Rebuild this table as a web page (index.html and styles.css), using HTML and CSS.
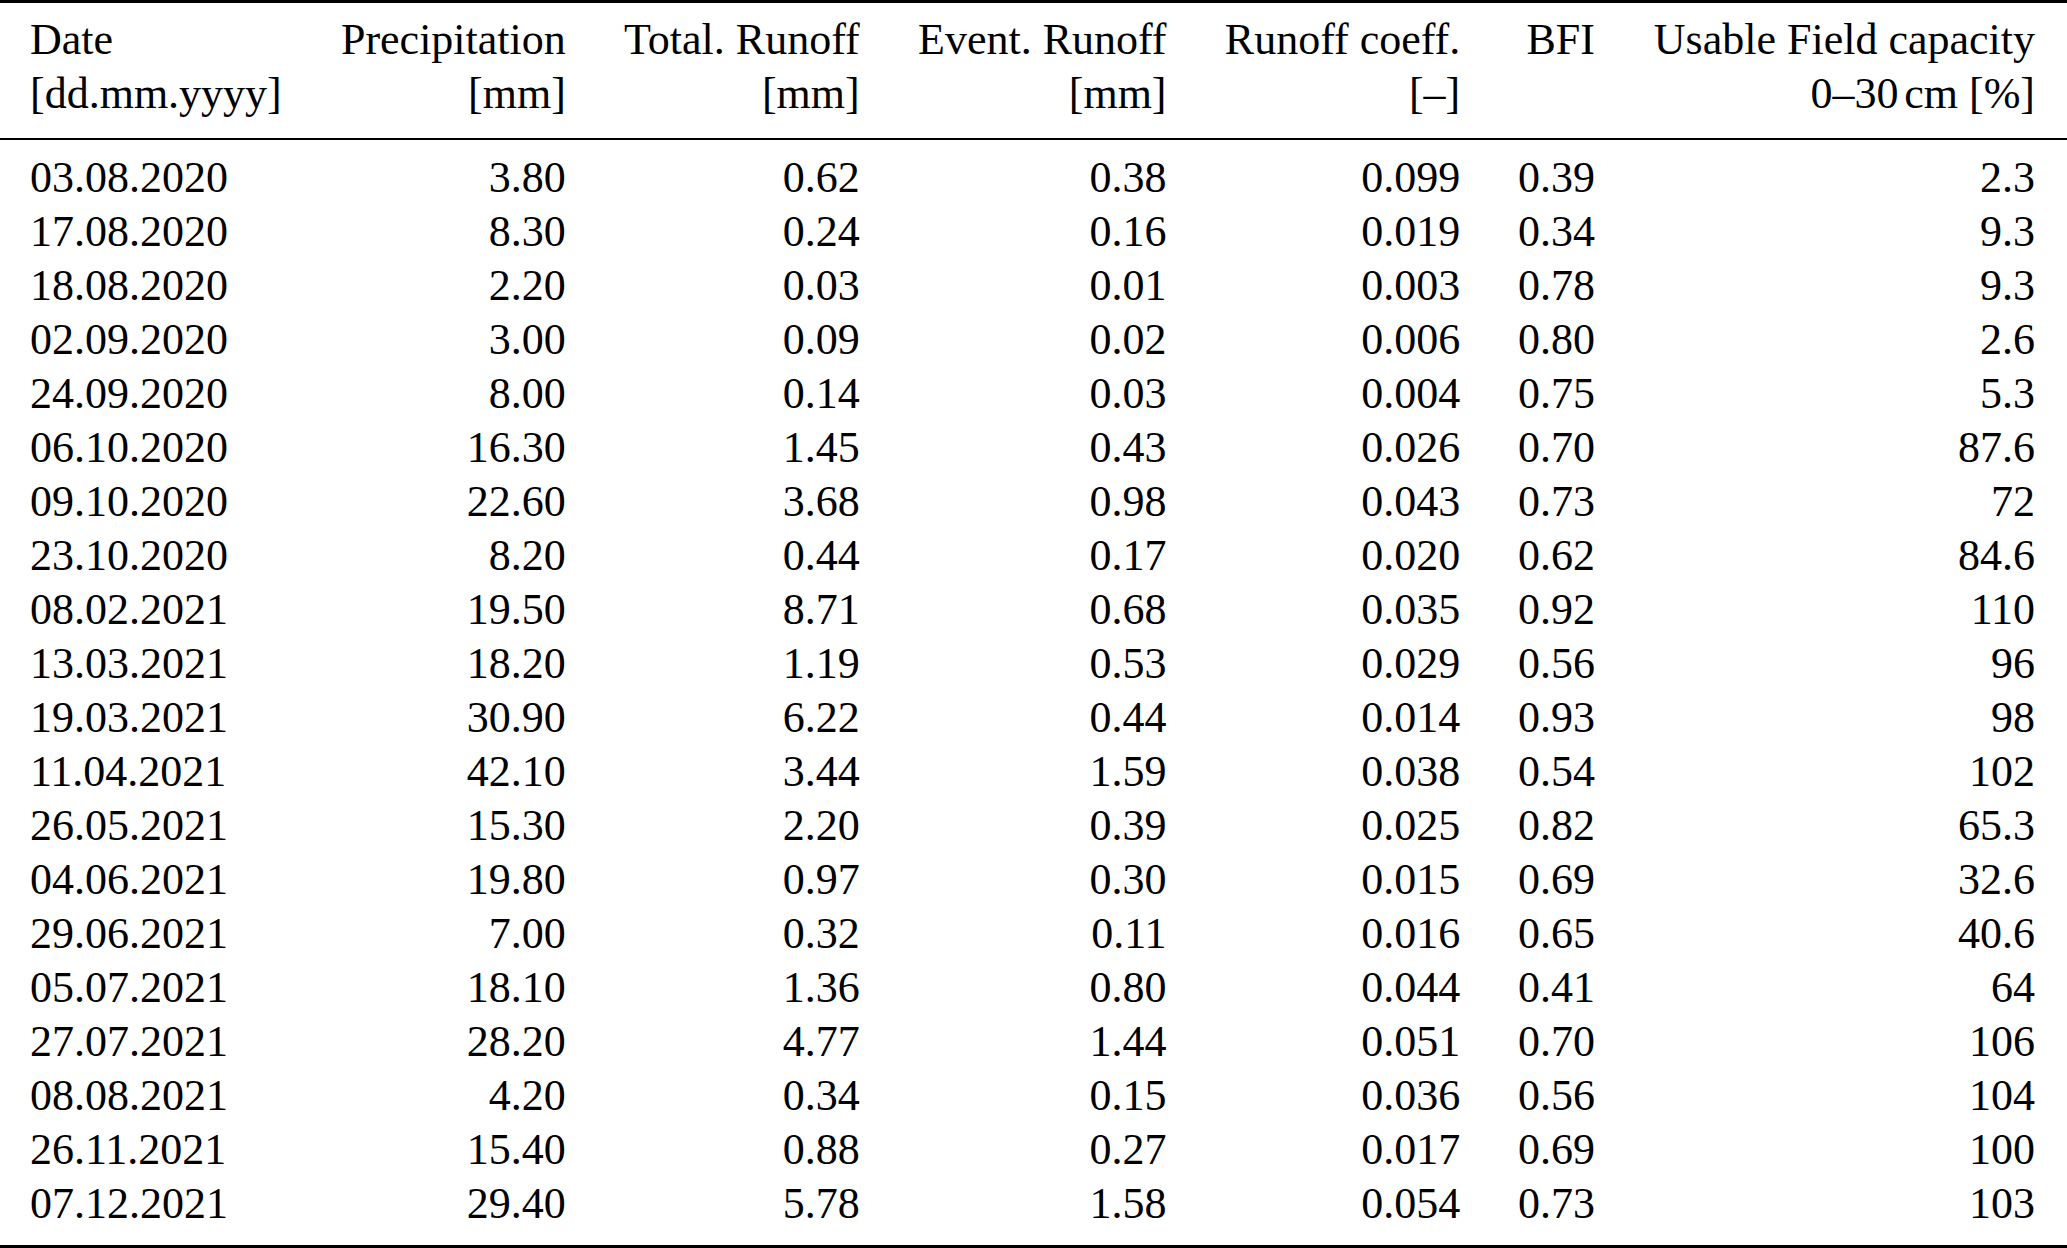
FILE: index.html
```html
<!DOCTYPE html>
<html lang="en">
<head>
<meta charset="utf-8">
<title>Runoff events</title>
<link rel="stylesheet" href="styles.css">
</head>
<body>
<table class="events">
  <thead>
    <tr>
      <th class="left">Date<br>[dd.mm.yyyy]</th>
      <th>Precipitation<br>[mm]</th>
      <th>Total. Runoff<br>[mm]</th>
      <th>Event. Runoff<br>[mm]</th>
      <th>Runoff coeff.<br>[–]</th>
      <th>BFI</th>
      <th>Usable Field capacity<br>0–30<span class="thin">&#8201;</span>cm [%]</th>
    </tr>
  </thead>
  <tbody>
    <tr><td class="left">03.08.2020</td><td>3.80</td><td>0.62</td><td>0.38</td><td>0.099</td><td>0.39</td><td>2.3</td></tr>
    <tr><td class="left">17.08.2020</td><td>8.30</td><td>0.24</td><td>0.16</td><td>0.019</td><td>0.34</td><td>9.3</td></tr>
    <tr><td class="left">18.08.2020</td><td>2.20</td><td>0.03</td><td>0.01</td><td>0.003</td><td>0.78</td><td>9.3</td></tr>
    <tr><td class="left">02.09.2020</td><td>3.00</td><td>0.09</td><td>0.02</td><td>0.006</td><td>0.80</td><td>2.6</td></tr>
    <tr><td class="left">24.09.2020</td><td>8.00</td><td>0.14</td><td>0.03</td><td>0.004</td><td>0.75</td><td>5.3</td></tr>
    <tr><td class="left">06.10.2020</td><td>16.30</td><td>1.45</td><td>0.43</td><td>0.026</td><td>0.70</td><td>87.6</td></tr>
    <tr><td class="left">09.10.2020</td><td>22.60</td><td>3.68</td><td>0.98</td><td>0.043</td><td>0.73</td><td>72</td></tr>
    <tr><td class="left">23.10.2020</td><td>8.20</td><td>0.44</td><td>0.17</td><td>0.020</td><td>0.62</td><td>84.6</td></tr>
    <tr><td class="left">08.02.2021</td><td>19.50</td><td>8.71</td><td>0.68</td><td>0.035</td><td>0.92</td><td>110</td></tr>
    <tr><td class="left">13.03.2021</td><td>18.20</td><td>1.19</td><td>0.53</td><td>0.029</td><td>0.56</td><td>96</td></tr>
    <tr><td class="left">19.03.2021</td><td>30.90</td><td>6.22</td><td>0.44</td><td>0.014</td><td>0.93</td><td>98</td></tr>
    <tr><td class="left">11.04.2021</td><td>42.10</td><td>3.44</td><td>1.59</td><td>0.038</td><td>0.54</td><td>102</td></tr>
    <tr><td class="left">26.05.2021</td><td>15.30</td><td>2.20</td><td>0.39</td><td>0.025</td><td>0.82</td><td>65.3</td></tr>
    <tr><td class="left">04.06.2021</td><td>19.80</td><td>0.97</td><td>0.30</td><td>0.015</td><td>0.69</td><td>32.6</td></tr>
    <tr><td class="left">29.06.2021</td><td>7.00</td><td>0.32</td><td>0.11</td><td>0.016</td><td>0.65</td><td>40.6</td></tr>
    <tr><td class="left">05.07.2021</td><td>18.10</td><td>1.36</td><td>0.80</td><td>0.044</td><td>0.41</td><td>64</td></tr>
    <tr><td class="left">27.07.2021</td><td>28.20</td><td>4.77</td><td>1.44</td><td>0.051</td><td>0.70</td><td>106</td></tr>
    <tr><td class="left">08.08.2021</td><td>4.20</td><td>0.34</td><td>0.15</td><td>0.036</td><td>0.56</td><td>104</td></tr>
    <tr><td class="left">26.11.2021</td><td>15.40</td><td>0.88</td><td>0.27</td><td>0.017</td><td>0.69</td><td>100</td></tr>
    <tr><td class="left">07.12.2021</td><td>29.40</td><td>5.78</td><td>1.58</td><td>0.054</td><td>0.73</td><td>103</td></tr>
  </tbody>
</table>
</body>
</html>
```

FILE: styles.css
```css
html, body {
  margin: 0;
  padding: 0;
  background: #ffffff;
}

body {
  width: 2067px;
  height: 1248px;
  overflow: hidden;
  color: #000000;
  font-family: "Liberation Serif", "Times New Roman", serif;
  font-size: 44px;
  line-height: 54px;
}

.events {
  width: 2067px;
  border-collapse: separate;
  border-spacing: 0;
}

.events th,
.events td {
  padding: 0 28.7px;
  text-align: right;
  white-space: nowrap;
  vertical-align: top;
  font-weight: normal;
}

.events th:first-child,
.events td:first-child {
  padding-left: 30px;
}

.events th:last-child,
.events td:last-child {
  padding-right: 32px;
}

.events .left {
  text-align: left;
}

.events .thin {
  letter-spacing: -3px;
}

.events thead th {
  border-top: 3px solid #000000;
  border-bottom: 2px solid #000000;
  padding-top: 10px;
  padding-bottom: 17px;
}

.events tbody tr:first-child td {
  padding-top: 11px;
}

.events tbody tr:last-child td {
  padding-bottom: 14px;
  border-bottom: 3px solid #000000;
}
```
